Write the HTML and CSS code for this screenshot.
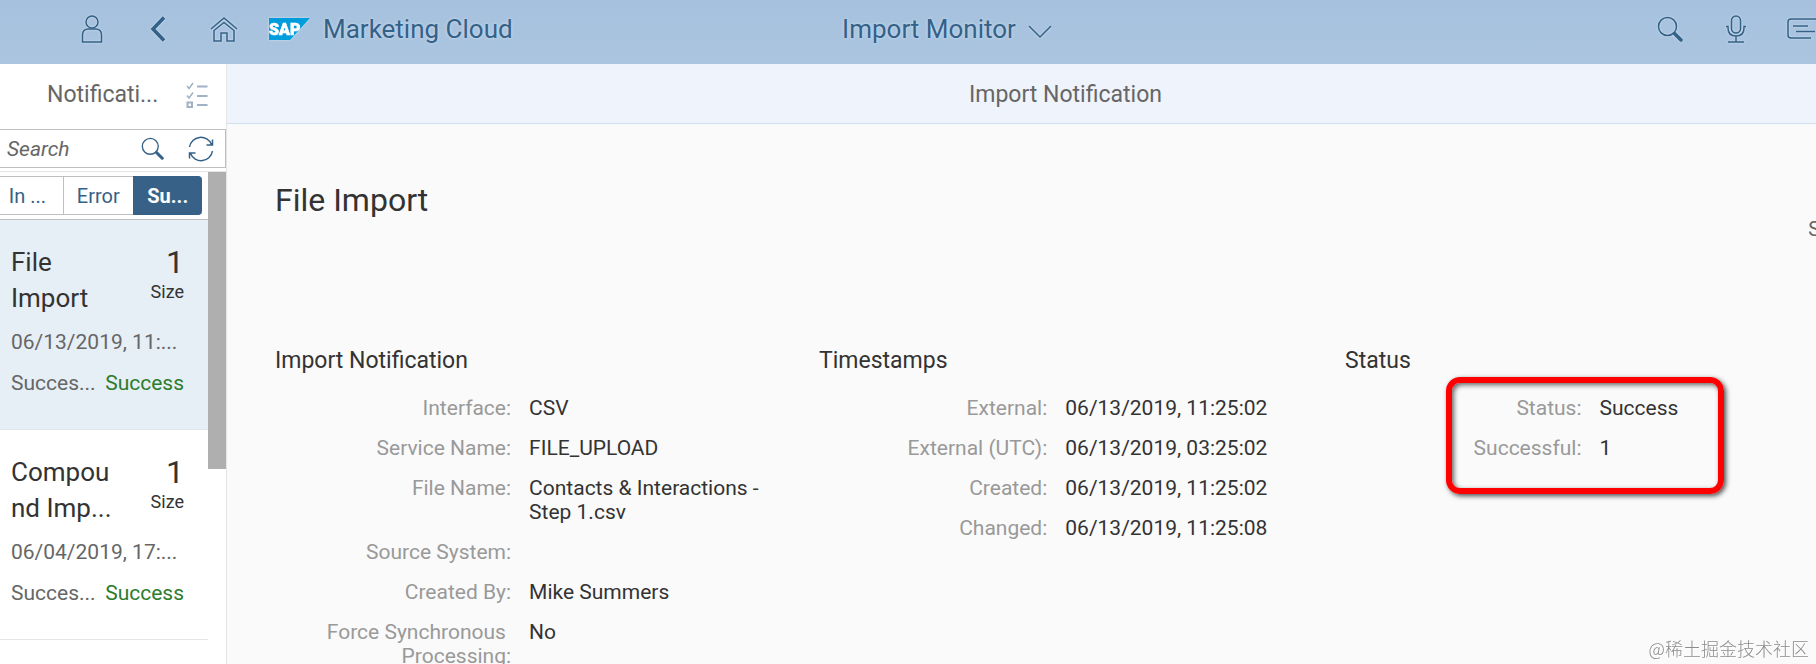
FILE: index.html
```html
<!DOCTYPE html>
<html lang="en">
<head>
    <meta charset="UTF-8">
    <meta name="viewport" content="width=device-width, initial-scale=1.0">
    <title>Import Monitor</title>
    <link rel="stylesheet" href="styles.css">
</head>
<body>
<div class="app">
    <header class="shell">
        <div class="shell-left">
            <button class="shell-btn" aria-label="User">
                <svg width="24" height="30" viewBox="0 0 24 30"><circle cx="12" cy="8" r="6"/><path d="M2.500 28 V21 Q2.500 15 8.500 15 H15.500 Q21.500 15 21.500 21 V28 Z"/></svg>
            </button>
            <button class="shell-btn" aria-label="Back">
                <svg class="thick" width="16" height="26" viewBox="0 0 16 26"><path d="M14 1.500 L3 13 L14 24.500"/></svg>
            </button>
            <button class="shell-btn" aria-label="Home">
                <svg width="28" height="26" viewBox="0 0 28 26"><path d="M1 13 L14 2 L27 13"/><path d="M4 14.500 V25 H11 V17 H17 V25 H24 V14.500 L14 6.500 Z"/></svg>
            </button>
            <a class="logo" href="#" aria-label="Home page">
                <svg width="41" height="22" viewBox="0 0 41 22"><path class="logo-bg" d="M0 0 H41 L21 22 H0 Z"/><text x="0" y="17">SAP</text></svg>
            </a>
            <span class="shell-title">Marketing Cloud</span>
        </div>
        <button class="app-title">Import Monitor
            <svg width="24" height="14" viewBox="0 0 24 14"><path d="M1 1 L12 12 L23 1"/></svg>
        </button>
        <div class="shell-right">
            <button class="shell-btn" aria-label="Search">
                <svg width="26" height="26" viewBox="0 0 26 26"><circle cx="10.500" cy="10.500" r="9"/><path class="handle" d="M17.500 17.500 L24 24"/></svg>
            </button>
            <button class="shell-btn" aria-label="Voice">
                <svg width="22" height="28" viewBox="0 0 22 28"><rect x="6.500" y="1" width="9" height="17" rx="4.500"/><path d="M1 11.500 H3 V13 Q3 21 11 21 Q19 21 19 13 V11.500 H21 M11 21 V27 M3 27 H19"/></svg>
            </button>
            <button class="shell-btn" aria-label="Notifications">
                <svg width="30" height="22" viewBox="0 0 30 22"><path d="M29 1 H4 Q1 1 1 4 V17 Q1 20 4 20 H24 M6 8 H21 M9 13.500 H28"/></svg>
            </button>
        </div>
    </header>
    <div class="columns">
        <aside class="master">
            <div class="master-header">
                <h2>Notificati...</h2>
                <button aria-label="Multi select">
                    <svg class="list-icon" width="22" height="26" viewBox="0 0 22 26"><path d="M11 4.500 H21.500 M11 14 H21.500 M11 23 H21.500"/><path class="thin" d="M1 4 L3 6.500 L7 1 M1 13.500 L3 16 L7 10.500"/><rect x="1.500" y="20.500" width="4.500" height="4.500"/></svg>
                </button>
            </div>
            <div class="search-bar">
                <input type="text" id="searchInput" placeholder="Search" aria-label="Search">
                <button aria-label="Start search">
                    <svg width="23" height="23" viewBox="0 0 26 26"><circle cx="10.500" cy="10.500" r="9"/><path class="handle" d="M17.500 17.500 L24 24"/></svg>
                </button>
                <button aria-label="Refresh">
                    <svg width="26" height="26" viewBox="0 0 26 26"><path d="M1.500 11 A11.500 11.500 0 0 1 23.500 8.500 M24.500 15 A11.500 11.500 0 0 1 2.500 17.500 M24.500 3.500 V9 H18.500 M1.500 22.500 V17 H7.500"/></svg>
                </button>
            </div>
            <div class="master-body">
                <div class="master-scroll">
                    <div class="filter">
                        <button>In ...</button>
                        <button>Error</button>
                        <button class="active">Su...</button>
                    </div>
                    <ul class="items">
                        <li class="item selected">
                            <div class="item-top">
                                <h3>File<br>Import</h3>
                                <div class="item-number"><strong>1</strong><span>Size</span></div>
                            </div>
                            <p>06/13/2019, 11:...</p>
                            <p class="item-status"><span>Succes...</span><span class="success">Success</span></p>
                        </li>
                        <li class="item">
                            <div class="item-top">
                                <h3>Compou<br>nd Imp...</h3>
                                <div class="item-number"><strong>1</strong><span>Size</span></div>
                            </div>
                            <p>06/04/2019, 17:...</p>
                            <p class="item-status"><span>Succes...</span><span class="success">Success</span></p>
                        </li>
                    </ul>
                </div>
                <div class="scrollbar"><div class="thumb"></div></div>
            </div>
        </aside>
        <main class="detail">
            <div class="detail-header"><h2>Import Notification</h2></div>
            <div class="object-header">
                <h1>File Import</h1>
                <span>S</span>
            </div>
            <div class="sections">
                <section>
                    <h3>Import Notification</h3>
                    <dl>
                        <dt>Interface:</dt><dd>CSV</dd>
                        <dt>Service Name:</dt><dd>FILE_UPLOAD</dd>
                        <dt>File Name:</dt><dd>Contacts &amp; Interactions - Step 1.csv</dd>
                        <dt>Source System:</dt><dd></dd>
                        <dt>Created By:</dt><dd>Mike Summers</dd>
                        <dt>Force Synchronous Processing:</dt><dd>No</dd>
                    </dl>
                </section>
                <section>
                    <h3>Timestamps</h3>
                    <dl>
                        <dt>External:</dt><dd>06/13/2019, 11:25:02</dd>
                        <dt>External (UTC):</dt><dd>06/13/2019, 03:25:02</dd>
                        <dt>Created:</dt><dd>06/13/2019, 11:25:02</dd>
                        <dt>Changed:</dt><dd>06/13/2019, 11:25:08</dd>
                    </dl>
                </section>
                <section>
                    <h3>Status</h3>
                    <dl>
                        <dt>Status:</dt><dd>Success</dd>
                        <dt>Successful:</dt><dd>1</dd>
                    </dl>
                    <div class="highlight"></div>
                </section>
            </div>
        </main>
    </div>
</div>
<div class="watermark">@稀土掘金技术社区</div>
</body>
</html>
```
FILE: styles.css
```css
* {
    box-sizing: border-box;
}
body {
    margin: 0;
    height: 100vh;
    overflow: hidden;
    background-color: #fafafa;
    color: #333;
    font-family: Roboto, "Noto Sans CJK SC", sans-serif;
    font-size: 21px;
    line-height: 24px;
}
h1, h2, h3, p, ul, dl, dd {
    margin: 0;
    padding: 0;
    font-weight: 400;
}
button {
    padding: 0;
    border: 0;
    background: none;
    color: #346187;
    font: inherit;
    cursor: pointer;
}
svg {
    display: block;
    fill: none;
    stroke: #346187;
    stroke-width: 1.5;
}
.thick {
    stroke-width: 3.5;
}
.handle {
    stroke-width: 3.5;
    stroke-linecap: round;
}

/* the shell runs past the right edge of the window */
.app {
    display: flex;
    flex-direction: column;
    width: calc(100% + 84px);
    height: 100vh;
}

.shell {
    flex: none;
    display: grid;
    grid-template-columns: 1fr auto 1fr;
    align-items: center;
    height: 64px;
    padding: 0 65px 7px 59px;
    background: linear-gradient(#a6c1de, #abc5e0);
    color: #346187;
    font-size: 26px;
    text-shadow: 0 0 3px #d5e3f2;
}
.shell svg {
    filter: drop-shadow(0 0 1px #d5e3f2);
}
.shell-left,
.shell-right {
    display: flex;
    align-items: center;
}
.shell-right {
    justify-content: flex-end;
}
.shell-btn {
    display: flex;
    justify-content: center;
    width: 66px;
}
.logo {
    margin: 0 13px 0 12px;
}
.logo-bg {
    fill: #009ddc;
    stroke: none;
}
.logo text {
    fill: #fff;
    stroke: #fff;
    stroke-width: 0.6;
    font-size: 16px;
    font-weight: 900;
    text-shadow: none;
}
.app-title {
    display: flex;
    align-items: center;
    gap: 12px;
    text-shadow: inherit;
}
.app-title svg {
    margin-top: 6px;
}

.columns {
    flex: 1;
    display: flex;
    min-height: 0;
}
.master {
    flex: none;
    display: flex;
    flex-direction: column;
    width: 227px;
    border-right: 1px solid #e5e5e5;
    background-color: #fff;
}
.master-header {
    display: flex;
    align-items: center;
    justify-content: space-between;
    height: 62px;
    margin-bottom: 3px;
    padding: 0 18px 0 47px;
}
h2 {
    color: #666;
    font-size: 23px;
}
.list-icon {
    stroke: #9fb2c6;
    stroke-width: 2;
}
.list-icon .thin {
    stroke-width: 1.5;
}
.search-bar {
    display: flex;
    align-items: center;
    gap: 24px;
    height: 39px;
    margin-bottom: 3px;
    padding-right: 11px;
    border: 1px solid #bfbfbf;
    border-left: 0;
}
.search-bar input {
    flex: 1;
    min-width: 0;
    padding: 0 0 0 7px;
    border: 0;
    outline: 0;
    background: none;
    font: inherit;
}
.search-bar input::placeholder {
    color: #666;
    font-style: italic;
}
.master-body {
    flex: 1;
    display: flex;
    min-height: 0;
    border-top: 1px solid #e5e5e5;
}
.master-scroll {
    flex: 1;
    overflow: hidden;
}
.scrollbar {
    width: 18px;
}
.thumb {
    height: 60%;
    min-height: 297px;
    background-color: #afafaf;
}
.filter {
    display: flex;
    height: 48px;
    padding: 4px 6px 4px 0;
    border-bottom: 1px solid #bfbfbf;
    font-size: 20px;
}
.filter button {
    flex: 1;
    border: 1px solid #bfbfbf;
    border-width: 1px 0 1px 1px;
}
.filter button:first-child {
    flex: none;
    width: 63px;
    padding-right: 8px;
    border-left: 0;
}
.filter .active {
    border-color: #346187;
    border-radius: 0 4px 4px 0;
    background-color: #386187;
    color: #fff;
    font-weight: 700;
}

.items {
    list-style: none;
}
.item {
    padding: 24px 24px 34px 11px;
    border-bottom: 1px solid #e5e5e5;
    color: #666;
}
.selected {
    background-color: #e6eef6;
}
.item-top {
    display: flex;
    justify-content: space-between;
    margin-bottom: 14px;
    color: #333;
}
.item h3 {
    font-size: 26px;
    line-height: 36px;
}
.item-number {
    display: flex;
    flex-direction: column;
    align-items: flex-end;
    font-size: 18px;
}
.item-number strong {
    font-size: 32px;
    font-weight: 400;
    line-height: 36px;
}
.item p {
    white-space: nowrap;
}
.item .item-status {
    display: flex;
    justify-content: space-between;
    margin-top: 17px;
}
.success {
    color: #2b7c2b;
}

.detail {
    flex: 1;
    min-width: 0;
}
.detail-header {
    display: flex;
    align-items: center;
    justify-content: center;
    height: 60px;
    padding: 2px 0 0 4px;
    border-bottom: 1px solid #d1e0ee;
    background-color: #eff3fb;
}
.object-header {
    display: flex;
    justify-content: space-between;
    height: 221px;
    padding: 56px 80px 0 48px;
}
.object-header h1 {
    font-size: 32px;
    line-height: 40px;
}
.object-header span {
    padding-top: 37px;
    color: #666;
    font-size: 20px;
}
.sections {
    display: grid;
    grid-template-columns: 544fr 526fr 545fr;
    padding: 0 10px 0 48px;
}
section {
    position: relative;
}
.sections h3 {
    margin-bottom: 19px;
    font-size: 23px;
    line-height: 32px;
}
dl {
    display: grid;
    grid-template-columns: 43.4% 1fr;
    row-gap: 16px;
}
dt {
    color: #999;
    text-align: right;
    white-space: break-spaces;
}
dd {
    padding: 0 30px 0 18px;
}
.highlight {
    position: absolute;
    top: 32px;
    left: 101px;
    width: 278px;
    height: 117px;
    border: 6px solid #f00;
    border-radius: 14px;
    box-shadow: 2px 2px 5px rgba(0, 0, 0, 0.7), inset 2px 2px 5px rgba(0, 0, 0, 0.6);
}
.watermark {
    position: fixed;
    right: 7px;
    bottom: 4px;
    color: #8c8c8c;
    font-family: "Noto Sans CJK SC", sans-serif;
    font-size: 18px;
    font-weight: 300;
    text-shadow: 1px 1px 1px #fff;
}
```
